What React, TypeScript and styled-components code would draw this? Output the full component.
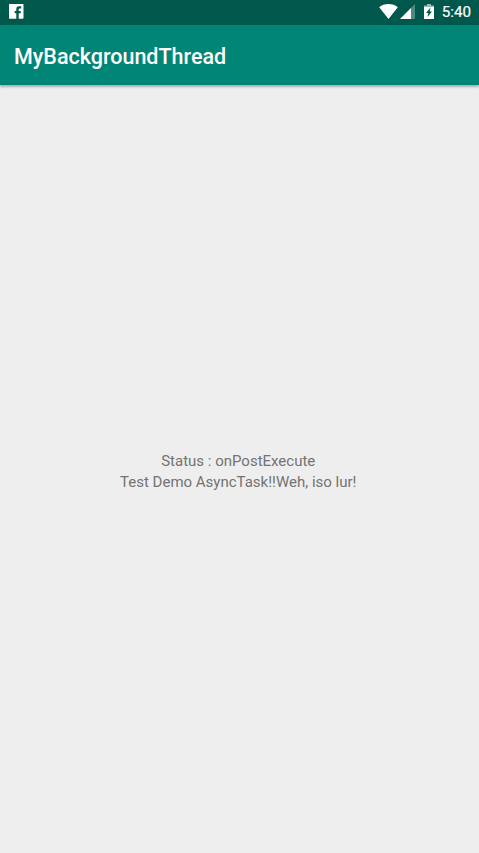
import React from 'react';
import styled, { createGlobalStyle } from 'styled-components';

const GlobalStyle = createGlobalStyle`
  * { box-sizing: border-box; }
  body { margin: 0; background: #eeeeee; font-family: Roboto, sans-serif; }
`;

const Screen = styled.div`
  display: flex;
  flex-direction: column;
  width: 479px;
  height: 853px;
  background: #eeeeee;
  overflow: hidden;
`;

const StatusBar = styled.header`
  display: flex;
  align-items: flex-start;
  justify-content: space-between;
  flex: none;
  height: 25px;
  padding: 0 8px 0 9px;
  background: #00574b;
`;

const Notifications = styled.div`
  display: flex;
`;

const SystemIcons = styled.div`
  display: flex;
  align-items: flex-start;
`;

const Icon = styled.svg<{ $gap?: number }>`
  display: block;
  margin-top: 4px;
  margin-right: ${({ $gap = 0 }) => $gap}px;
`;

const Clock = styled.time`
  font-size: 15.2px;
  line-height: 25px;
  font-weight: 400;
  color: #ffffff;
  -webkit-text-stroke: 0.2px #ffffff;
`;

const Toolbar = styled.div`
  display: flex;
  align-items: center;
  flex: none;
  height: 60px;
  padding: 2px 14px 0;
  background: #008577;
  box-shadow: 0 2px 2px rgba(0, 0, 0, 0.27);
`;

const Title = styled.h1`
  margin: 0;
  font-size: 21.5px;
  font-weight: 500;
  color: #ffffff;
`;

const Content = styled.main`
  display: flex;
  flex: 1;
  align-items: center;
  justify-content: center;
  padding: 5px 2.500px 0 0;
`;

const Message = styled.p`
  margin: 0;
  font-size: 15px;
  line-height: 20.500px;
  text-align: center;
  color: #737373;
`;

export default function App() {
  return (
    <Screen>
      <GlobalStyle />
      <StatusBar>
        <Notifications>
          <Icon width="15" height="15" viewBox="0 0 15 15">
            <path fill="#fff" d="M.5 0h13.500q.5 0 .5.5V14q0 .7-.7.7H9.700V9.300h2V7.100h-2V5.700q0-1.200 1-1.200h1.500V2.200h-2Q7.300 2.200 7.300 5v2.100H5.700v2.200h1.600v5.400H.5Q0 14.700 0 14V.5Q0 0 .5 0z" />
          </Icon>
        </Notifications>
        <SystemIcons>
          <Icon $gap={2} width="19" height="16" viewBox="0 0 19 16">
            <path fill="#fff" d="M.2 3.300Q4 0 9.500 0T18.800 3.300L9.500 15z" />
          </Icon>
          <Icon $gap={9} width="15" height="15" viewBox="0 0 15 15">
            <path fill="#fff" fillOpacity=".3" d="M15 0v15H0z" />
            <path fill="#fff" d="M11 4v11H0z" />
          </Icon>
          <Icon $gap={8} width="10" height="15" viewBox="0 0 10 15">
            <path fill="#fff" fillOpacity=".6" d="M3 0h4v1.500h3V3H0V1.500h3z" />
            <path fill="#fff" fillRule="evenodd" d="M0 3h10v12H0zM6.500 3.500L2 9h2.300L3.500 13L8 7.500H5.700z" />
          </Icon>
          <Clock>5:40</Clock>
        </SystemIcons>
      </StatusBar>
      <Toolbar>
        <Title>MyBackgroundThread</Title>
      </Toolbar>
      <Content>
        <Message>
          Status : onPostExecute
          <br />
          Test Demo AsyncTask!!Weh, iso lur!
        </Message>
      </Content>
    </Screen>
  );
}
